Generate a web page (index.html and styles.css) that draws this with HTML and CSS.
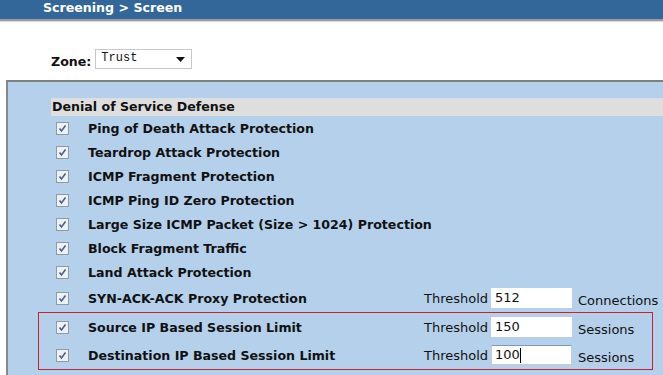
FILE: index.html
```html
<!DOCTYPE html>
<html lang="en">
<head>
    <meta charset="UTF-8">
    <title>Screening &gt; Screen</title>
    <link rel="stylesheet" href="styles.css">
</head>
<body>
    <div class="topbar">Screening &gt; Screen</div>

    <div class="zone">
        <span class="zoneLabel">Zone:</span>
        <div class="select">
            <span>Trust</span>
            <svg width="9" height="5" viewBox="0 0 9 5"><path d="M0 0H9L4.5 5Z" fill="#111"/></svg>
        </div>
    </div>

    <div class="panel">
        <div class="heading">Denial of Service Defense</div>

        <div class="row"><span class="check"></span><span class="label">Ping of Death Attack Protection</span></div>
        <div class="row"><span class="check"></span><span class="label">Teardrop Attack Protection</span></div>
        <div class="row"><span class="check"></span><span class="label">ICMP Fragment Protection</span></div>
        <div class="row"><span class="check"></span><span class="label">ICMP Ping ID Zero Protection</span></div>
        <div class="row"><span class="check"></span><span class="label">Large Size ICMP Packet (Size &gt; 1024) Protection</span></div>
        <div class="row"><span class="check"></span><span class="label">Block Fragment Traffic</span></div>
        <div class="row"><span class="check"></span><span class="label">Land Attack Protection</span></div>
        <div class="row tall">
            <span class="check"></span><span class="label">SYN-ACK-ACK Proxy Protection</span>
            <span class="thr">Threshold</span><span class="field">512</span><span class="unit">Connections</span>
        </div>

        <div class="marked">
            <div class="row tall">
                <span class="check"></span><span class="label">Source IP Based Session Limit</span>
                <span class="thr">Threshold</span><span class="field">150</span><span class="unit">Sessions</span>
            </div>
            <div class="row tall">
                <span class="check"></span><span class="label">Destination IP Based Session Limit</span>
                <span class="thr">Threshold</span><span class="field active">100<i class="caret"></i></span><span class="unit">Sessions</span>
            </div>
        </div>
    </div>
</body>
</html>
```

FILE: styles.css
```css
body{
    margin: 0;
    background: #fff;
    font-family: "DejaVu Sans", Verdana, sans-serif;
    font-size: 13px;
    color: #111;
    overflow: hidden;
    height: 375px;
}
.topbar{
    height: 19px;
    line-height: 16px;
    padding-left: 43px;
    background: #336699;
    color: #fff;
    font-weight: bold;
    font-size: 12.6px;
    border-bottom: 2px solid #9a9a9a;
    box-shadow: 0 1px 1px #ddd;
}
.zone{
    height: 31px;
    padding: 28px 0 0 51px;
    display: flex;
    align-items: flex-start;
    gap: 4px;
}
.zoneLabel{
    font-weight: bold;
    font-size: 12.6px;
    line-height: 24px;
    padding-top: 1px;
}
.select{
    width: 97px;
    height: 20px;
    border: 1px solid #c8c8c8;
    background: #fff;
    display: flex;
    align-items: center;
    justify-content: space-between;
    padding: 0 6px 0 5px;
    box-sizing: border-box;
    font-family: "Liberation Mono", monospace;
    font-size: 12px;
}
.select span{
    margin-top: -3px;
}
.panel{
    margin-left: 6px;
    border-left: 2px solid #888;
    border-top: 2px solid #808080;
    background: #b5d0eb;
    height: 277px;
    padding-top: 16px;
}
.heading{
    margin-left: 43px;
    height: 18px;
    line-height: 18px;
    padding-left: 1px;
    background: #dedede;
    font-weight: bold;
    font-size: 12.6px;
}
.row{
    display: grid;
    grid-template-columns: 32px 336px 67px 87px auto;
    align-items: center;
    height: 24px;
    padding-left: 48px;
}
.row.tall{
    height: 28px;
}
.check{
    width: 11px;
    height: 11px;
    border: 1px solid #8e9aa6;
    background: #eef1f4 url("data:image/svg+xml,%3Csvg xmlns='http://www.w3.org/2000/svg' width='11' height='11'%3E%3Cpath d='M2.5 5.5L4.5 8L8.5 2.5' fill='none' stroke='%234a5f8c' stroke-width='1.6'/%3E%3C/svg%3E") no-repeat center;
    margin-top: 1px;
}
.label{
    font-weight: bold;
    font-size: 12.6px;
    white-space: nowrap;
}
.thr{
    white-space: nowrap;
}
.field{
    width: 81px;
    height: 20px;
    line-height: 20px;
    background: #fff;
    padding-left: 4px;
    box-sizing: border-box;
    display: flex;
    align-items: center;
}
.field.active{
    border: 1px solid #c4ccd6;
    border-top-color: #7a9cc4;
    padding-left: 3px;
}
.caret{
    width: 1px;
    height: 15px;
    background: #000;
}
.unit{
    white-space: nowrap;
    margin-top: 5px;
}
.marked{
    margin: 0 10px 0 30px;
    border: 1px solid #c8202e;
}
.marked .row{
    padding-left: 17px;
}
```
